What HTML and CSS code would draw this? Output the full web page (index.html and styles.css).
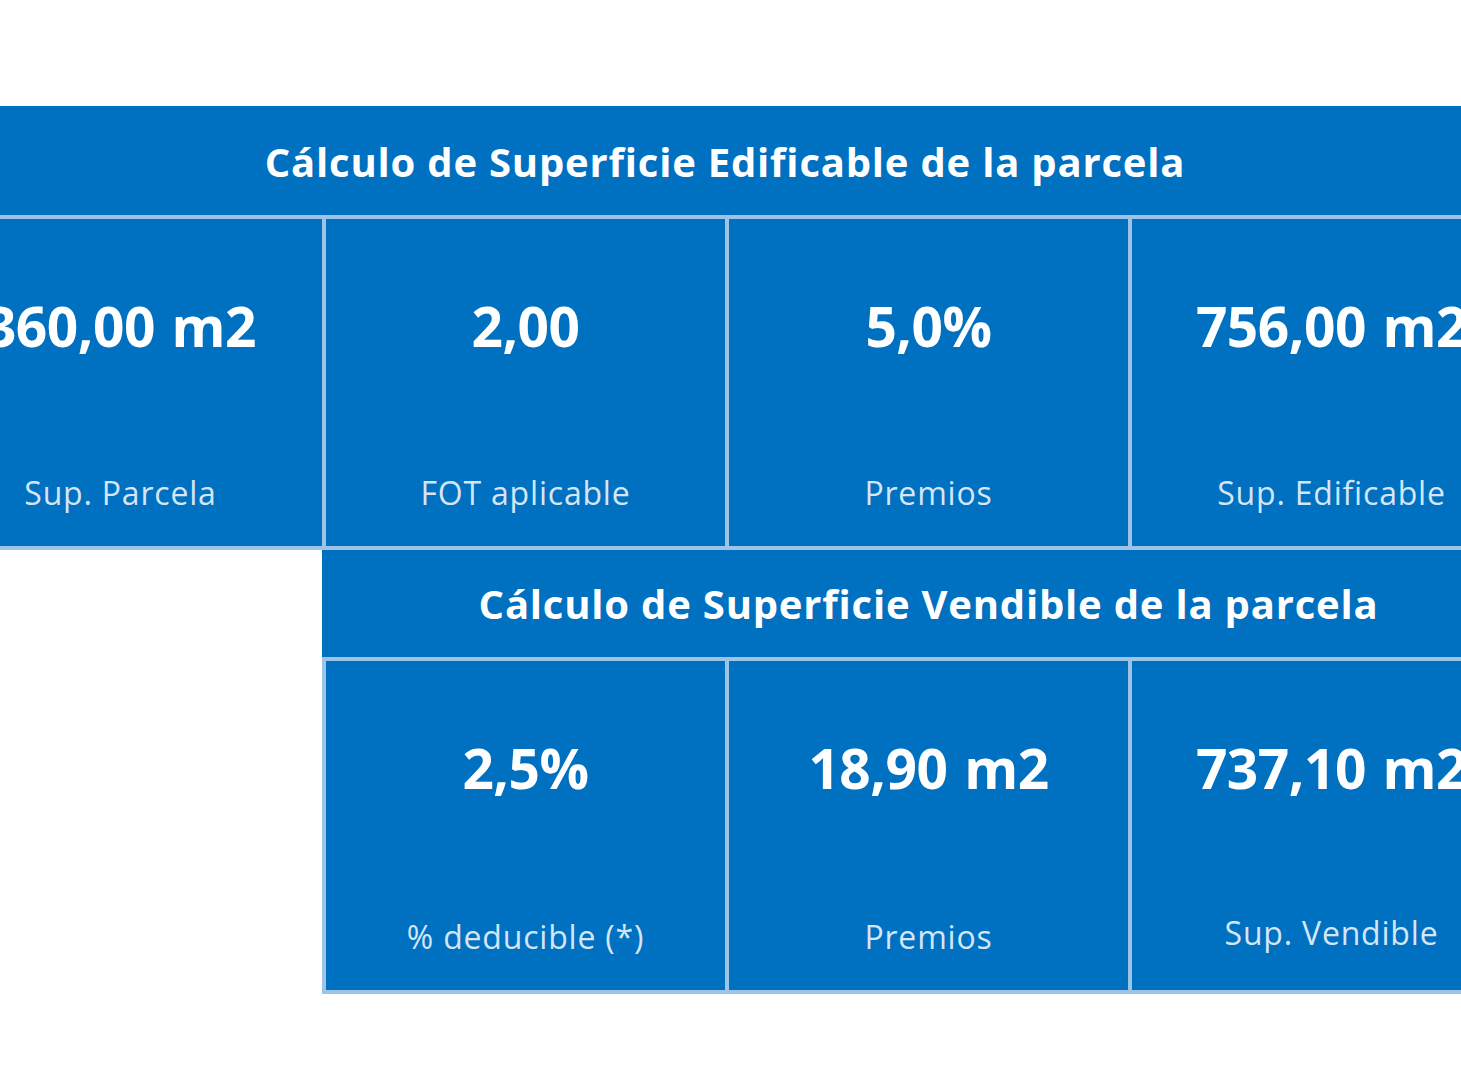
FILE: index.html
```html
<!DOCTYPE html>
<html lang="es">
<head>
<meta charset="utf-8">
<title>Cálculo de Superficie</title>
<link rel="stylesheet" href="styles.css">
</head>
<body>
<div class="page">
  <div class="calc">
    <div class="head head-full">Cálculo de Superficie Edificable de la parcela</div>
    <div class="cell"><div class="val">360,00 m2</div><div class="lbl">Sup. Parcela</div></div>
    <div class="cell sep"><div class="val">2,00</div><div class="lbl">FOT aplicable</div></div>
    <div class="cell sep"><div class="val">5,0%</div><div class="lbl">Premios</div></div>
    <div class="cell sep"><div class="val">756,00 m2</div><div class="lbl">Sup. Edificable</div></div>

    <div class="blank"></div>
    <div class="head head-part">Cálculo de Superficie Vendible de la parcela</div>
    <div class="cell cell2 sep"><div class="val">2,5%</div><div class="lbl">% deducible (*)</div></div>
    <div class="cell cell2 sep"><div class="val">18,90 m2</div><div class="lbl">Premios</div></div>
    <div class="cell cell2 sep"><div class="val">737,10 m2</div><div class="lbl lbl-up">Sup. Vendible</div></div>
  </div>
</div>
</body>
</html>
```

FILE: styles.css
```css
html, body {
  margin: 0;
  padding: 0;
  background: #ffffff;
  overflow: hidden;
}

.page {
  width: 1461px;
  height: 1080px;
  overflow: hidden;
  padding-top: 106px;
  box-sizing: border-box;
}

.calc {
  display: grid;
  grid-template-columns: repeat(4, 403px);
  margin-left: -81px;
  font-family: "Open Sans", "Liberation Sans", sans-serif;
  color: #ffffff;
}

.head {
  background: #0070c0;
  border-bottom: 4px solid #9dc3e6;
  display: flex;
  align-items: center;
  justify-content: center;
  font-weight: 700;
  font-size: 40px;
  letter-spacing: 0.8px;
  padding-top: 2px;
  box-sizing: border-box;
}

.head-full {
  grid-column: 1 / span 4;
  height: 113px;
}

.head-part {
  grid-column: 2 / span 3;
  height: 111px;
  padding-left: 4px;
  padding-top: 0;
}

.blank {
  grid-column: 1;
  grid-row: 3 / span 2;
  background: #ffffff;
}

.cell {
  background: #0070c0;
  border-bottom: 4px solid #9dc3e6;
  height: 331px;
  box-sizing: border-box;
  display: flex;
  flex-direction: column;
  align-items: center;
}

.cell2 {
  height: 333px;
}

.sep {
  border-left: 4px solid #9dc3e6;
}

.val {
  margin-top: 77px;
  height: 60px;
  line-height: 60px;
  font-weight: 700;
  font-size: 55px;
  letter-spacing: -0.5px;
  word-spacing: 3px;
  white-space: nowrap;
}

.lbl {
  margin-top: auto;
  margin-bottom: 33px;
  height: 40px;
  line-height: 40px;
  font-size: 32px;
  letter-spacing: 0.8px;
  color: #d4e5f6;
  white-space: nowrap;
}

.lbl-up {
  margin-bottom: 37px;
}
```
